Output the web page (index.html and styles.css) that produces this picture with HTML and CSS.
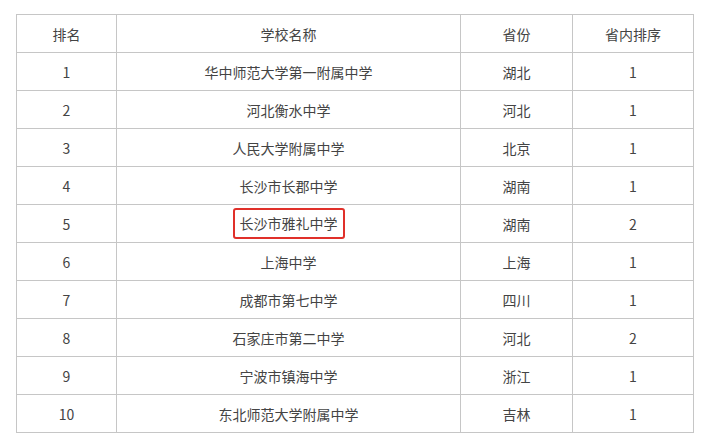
FILE: index.html
```html
<!DOCTYPE html>
<html lang="zh">
<head>
<meta charset="utf-8">
<link rel="stylesheet" href="styles.css">
</head>
<body>
<div class="page">
<table class="rank">
  <colgroup>
    <col class="c1"><col class="c2"><col class="c3"><col class="c4">
  </colgroup>
  <thead>
    <tr><th>排名</th><th>学校名称</th><th>省份</th><th>省内排序</th></tr>
  </thead>
  <tbody>
    <tr><td>1</td><td>华中师范大学第一附属中学</td><td>湖北</td><td>1</td></tr>
    <tr><td>2</td><td>河北衡水中学</td><td>河北</td><td>1</td></tr>
    <tr><td>3</td><td>人民大学附属中学</td><td>北京</td><td>1</td></tr>
    <tr><td>4</td><td>长沙市长郡中学</td><td>湖南</td><td>1</td></tr>
    <tr><td>5</td><td><span class="mark">长沙市雅礼中学</span></td><td>湖南</td><td>2</td></tr>
    <tr><td>6</td><td>上海中学</td><td>上海</td><td>1</td></tr>
    <tr><td>7</td><td>成都市第七中学</td><td>四川</td><td>1</td></tr>
    <tr><td>8</td><td>石家庄市第二中学</td><td>河北</td><td>2</td></tr>
    <tr><td>9</td><td>宁波市镇海中学</td><td>浙江</td><td>1</td></tr>
    <tr><td>10</td><td>东北师范大学附属中学</td><td>吉林</td><td>1</td></tr>
  </tbody>
</table>
</div>
</body>
</html>
```

FILE: styles.css
```css
html, body {
  margin: 0;
  padding: 0;
  background: #ffffff;
}
.page {
  padding: 14px 0 0 16px;
}
.rank {
  border-collapse: collapse;
  table-layout: fixed;
  width: 677px;
  font-family: "Noto Sans CJK SC", "Noto Sans", sans-serif;
  font-size: 14px;
  color: #444444;
}
.c1 { width: 100px; }
.c2 { width: 344px; }
.c3 { width: 112px; }
.c4 { width: 121px; }
.rank th, .rank td {
  border: 1px solid #c6c6c6;
  height: 37px;
  padding: 0;
  text-align: center;
  vertical-align: middle;
  font-weight: normal;
  line-height: 20px;
}
.mark {
  display: inline-block;
  border: 2px solid #e0302a;
  border-radius: 3px;
  padding: 3px 5px;
  line-height: 21px;
}
```
